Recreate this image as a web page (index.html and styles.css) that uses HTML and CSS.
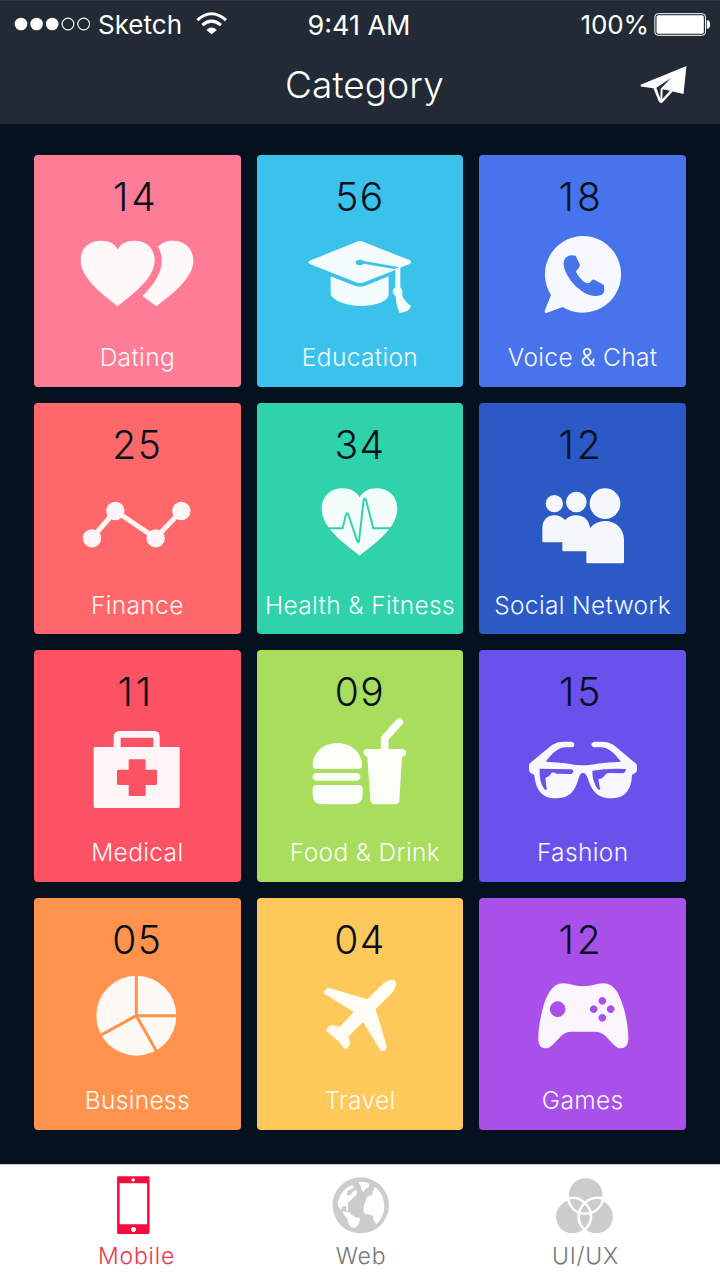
FILE: index.html
```html
<!DOCTYPE html>
<html lang="en">
<head>
<meta charset="utf-8">
<title>Category</title>
<link rel="stylesheet" href="styles.css">
</head>
<body>
<div class="screen">
  <header class="header">
    <div class="status">
      <div class="status-left">
        <svg class="signal" viewBox="0 0 78 14"><g fill="#fff"><circle cx="7" cy="7" r="6.3"/><circle cx="22.6" cy="7" r="6.3"/><circle cx="38.2" cy="7" r="6.3"/></g><g fill="none" stroke="#fff" stroke-width="1.1"><circle cx="54" cy="7" r="5.9"/><circle cx="69.7" cy="7" r="5.9"/></g></svg>
        <span class="carrier">Sketch</span>
        <svg class="wifi" viewBox="588 34 92 68"><path d="M592 58Q634 20 677 58" fill="none" stroke="#fff" stroke-width="9"/><path d="M607 73Q634 49 662 73" fill="none" stroke="#fff" stroke-width="9"/><path d="M619 87Q634 73 650 87L634 100Z" fill="#fff"/></svg>
      </div>
      <span class="clock">9:41 AM</span>
      <div class="status-right">
        <span class="percent">100%</span>
        <svg class="battery" viewBox="882 36 170 69"><rect x="884" y="38" width="152" height="65" rx="10" fill="none" stroke="#fff" stroke-width="3"/><rect x="889" y="43" width="142" height="55" rx="5" fill="#fff"/><path d="M1040 58h4q6 3 6 13t-6 12h-4z" fill="#fff"/></svg>
      </div>
    </div>
    <div class="nav">
      <h1 class="title">Category</h1>
      <svg class="send" viewBox="840 192 144 118"><path fill="#fff" fill-rule="evenodd" d="M841 252L980 195L971 280L938 272L905 308L897 304L880 262L842 257ZM889 261L901 294L902 264L933 231ZM908 265L907 295L930 270Z"/></svg>
    </div>
  </header>

  <main class="grid">
    <section class="tile pink"><div class="count narrow">14</div>
      <svg class="icon" viewBox="22 207 600 300"><path d="M264 469C232 442 153 390 153 330C153 292 180 272 214 272C240 272 255 281 264 298C273 281 289 272 315 272C350 272 375 295 375 331C375 389 297 442 264 469Z"/><path d="M385 290C397 277 411 272 430 272C467 272 491 297 491 332C491 389 412 443 380 469L338 438C366 410 396 374 396 335C396 316 393 303 385 290Z"/></svg>
      <div class="label">Dating</div></section>
    <section class="tile sky"><div class="count">56</div>
      <svg class="icon" viewBox="30 207 600 300"><path fill-rule="evenodd" d="M330 273Q335 273 343 277L480 331Q487 337 480 341L451 353L451 412Q460 420 456 433Q460 452 483 468Q477 487 449 489Q438 466 437 439Q422 430 432 415L436 412L436 360L342 397Q330 403 318 397L179 342Q171 337 179 332L317 277Q325 273 330 273ZM341 333C333 327 317 329 317 338C317 347 334 348 341 341L433 357L448 352Z"/><path d="M242 379L314 407Q330 413 346 407L416 379V432C416 456 373 468 330 468C286 468 242 448 242 430Z"/></svg>
      <div class="label">Education</div></section>
    <section class="tile blue"><div class="count narrow">18</div>
      <svg class="icon" viewBox="23 207 600 300"><path fill-rule="evenodd" d="M323 258A115 115 0 1 1 262 471L213 489Q205 489 209 480L227 435A115 115 0 0 1 323 258ZM301 317Q276 311 267 329C259 348 275 378 293 400C313 423 339 439 363 438Q386 438 387 421L386 405L357 389Q349 387 345 397Q341 400 335 400C321 394 309 379 302 365Q304 360 311 353Q315 347 313 343Z"/></svg>
      <div class="label">Voice &amp; Chat</div></section>

    <section class="tile coral"><div class="count">25</div>
      <svg class="icon" viewBox="22 200 600 300"><path d="M187 413L257 332L378 413L455 332" fill="none" stroke="currentColor" stroke-width="15"/><circle cx="187" cy="414" r="27.5"/><circle cx="257" cy="332" r="27.5"/><circle cx="378" cy="414" r="27.5"/><circle cx="455" cy="332" r="27.5"/></svg>
      <div class="label">Finance</div></section>
    <section class="tile green"><div class="count">34</div>
      <svg class="icon" viewBox="690 200 600 300"><path d="M989 466C955 438 875 386 875 326C875 289 902 264 936 264C961 264 979 274 989 291C999 274 1016 264 1041 264C1077 264 1102 290 1102 326C1102 386 1023 438 989 466Z"/><path class="cut" d="M896 384H938L948 342Q951 336 955 342L982 423Q985 429 987 422L1001 299Q1004 290 1008 299L1030 384H1085" fill="none" stroke-width="6"/></svg>
      <div class="label">Health &amp; Fitness</div></section>
    <section class="tile royal"><div class="count narrow">12</div>
      <svg class="icon" viewBox="23 200 600 300"><circle cx="237" cy="310" r="26"/><circle cx="303" cy="305" r="31"/><circle cx="389" cy="310" r="46"/><path d="M204 426Q201 426 201 423V383C201 358 218 345 237 345Q257 345 269 359Q281 345 302 345C327 345 342 361 344 383Q362 362 389 362C422 362 446 386 446 418V486Q446 489 443 489H336Q333 489 333 486V453H264Q261 453 261 450V426Z"/></svg>
      <div class="label">Social Network</div></section>

    <section class="tile red"><div class="count narrow">11</div>
      <svg class="icon" viewBox="22 207 600 300"><path fill-rule="evenodd" d="M252 306V276Q252 258 270 258H374Q390 258 390 276V306H446Q450 306 450 310V485Q450 489 446 489H196Q192 489 192 485V310Q192 306 196 306ZM273 278V306H371V278ZM301 343Q297 343 297 347V374H266Q262 374 262 378V416Q262 420 266 420H297V449Q297 453 301 453H344Q348 453 348 449V420H378Q382 420 382 416V378Q382 374 378 374H348V347Q348 343 344 343Z"/></svg>
      <div class="label">Medical</div></section>
    <section class="tile lime"><div class="count">09</div>
      <svg class="icon" viewBox="690 206 600 300"><path d="M848 359C848 324 878 293 922 293C966 293 996 324 996 359Q996 371 984 371H860Q848 371 848 359Z"/><rect x="848" y="383" width="143" height="23" rx="11.5"/><path d="M860 419H986Q998 419 998 431V448Q998 477 968 477H878Q848 477 848 448V431Q848 419 860 419Z"/><path d="M1064 322V279L1108 230" fill="none" stroke="currentColor" stroke-width="23" stroke-linecap="round" stroke-linejoin="round"/><path d="M1011 311H1117Q1129 312 1129 323Q1127 333 1116 334L1108 465Q1107 477 1096 477H1033Q1022 477 1021 465L1012 334Q1000 331 1000 321Q1001 311 1011 311Z"/></svg>
      <div class="label nudge">Food &amp; Drink</div></section>
    <section class="tile violet"><div class="count narrow">15</div>
      <svg class="icon" viewBox="23 207 600 300"><path fill-rule="evenodd" d="M161 362Q161 356 169 350L230 300Q245 290 265 290H287Q297 291 297 299Q296 307 288 307H273C247 307 230 326 211 350Q248 351 280 356Q305 361 322 361Q338 361 365 356Q398 351 437 350C418 326 401 307 375 307H359Q349 306 348 299Q349 291 359 290H380Q400 290 415 300L475 350Q485 356 485 362V376Q483 385 470 389C468 435 450 460 405 460C363 460 347 431 337 400Q332 384 323 384Q314 384 310 400C300 435 286 460 242 460C197 460 180 430 177 389Q161 384 161 374ZM193 371C192 400 197 422 210 435Q218 434 213 425L210 399Q224 394 228 384Q232 380 244 386L289 387Q301 374 286 373ZM351 377C351 402 359 422 370 435Q378 434 373 427L369 402Q381 402 387 393Q392 384 402 384L444 385Q453 380 451 372Q397 369 351 377Z"/></svg>
      <div class="label">Fashion</div></section>

    <section class="tile orange"><div class="count">05</div>
      <svg class="icon" viewBox="22 200 600 300"><circle cx="320" cy="361" r="120"/><path class="cut" d="M320 236V361H445M320 361L380 467M320 361L212 420" fill="none" stroke-width="9"/></svg>
      <div class="label">Business</div></section>
    <section class="tile yellow"><div class="count">04</div>
      <svg class="icon" viewBox="690 200 600 300"><path d="M1012 312L1056 268Q1077 250 1092 254Q1101 260 1096 276Q1092 288 1080 299L1037 341L1070 453Q1071 462 1065 466Q1056 470 1051 464L999 380L956 423L960 443Q960 448 957 451L951 459Q946 463 941 458L923 434Q919 436 916 430L892 409Q886 405 891 399L900 391Q905 388 911 390L929 394L972 350L884 296Q879 292 883 288L889 281Q894 277 901 279Z"/></svg>
      <div class="label">Travel</div></section>
    <section class="tile purple"><div class="count narrow">12</div>
      <svg class="icon" viewBox="23 200 600 300"><path fill-rule="evenodd" d="M264 264C287 264 294 273 323 273C354 273 361 264 384 264C418 264 434 299 446 341C454 370 459 405 459 429C459 448 451 459 438 459C420 459 410 441 393 424C380 411 370 409 355 409H293C276 409 267 412 255 424C238 441 227 459 209 459C195 459 189 447 189 429C189 405 194 370 202 341C214 299 230 264 264 264ZM247 318a23.500 23.500 0 1 0 .1 0zM381 305a11.500 11.500 0 1 0 .1 0zM355 330a11.500 11.500 0 1 0 .1 0zM406 330a11.500 11.500 0 1 0 .1 0zM381 356a11.500 11.500 0 1 0 .1 0z"/></svg>
      <div class="label">Games</div></section>
  </main>

  <nav class="tabs">
    <a class="tab active">
      <svg class="tab-icon" preserveAspectRatio="none" viewBox="73 56 168 180"><path fill="#f20d3c" fill-rule="evenodd" d="M108 63H191Q195 63 195 67V232Q195 236 191 236H108Q104 236 104 232V67Q104 63 108 63ZM111 84V207H188V84ZM149 69a5 5 0 1 0 .1 0zM150 215a7 7.500 0 1 0 .1 0z"/></svg>
      <span class="tab-label">Mobile</span></a>
    <a class="tab">
      <svg class="tab-icon" preserveAspectRatio="none" viewBox="701 56 168 180"><ellipse cx="787" cy="150" rx="79" ry="84" fill="#ccc"/><g fill="#fff"><path d="M767 90C750 90 729 112 722 143Q723 157 734 164L735 154Q742 149 747 155L746 166L752 168L751 151Q748 145 753 141L771 123Q776 120 777 108Q773 101 767 106Q764 115 751 122Q746 115 752 105Q760 103 767 97Z"/><path d="M780 80Q797 78 812 85L808 97Q797 99 795 111Q787 104 787 92Z"/><path d="M827 94C850 113 859 149 849 178Q844 193 831 206Q822 198 821 183Q817 175 800 177Q792 170 796 151L804 125L819 119L821 109Z"/><path d="M735 168L748 170Q759 170 761 178Q770 187 784 188Q787 198 777 213L768 218Q757 215 754 208L750 190Q740 182 735 168Z"/></g></svg>
      <span class="tab-label">Web</span></a>
    <a class="tab">
      <svg class="tab-icon" preserveAspectRatio="none" viewBox="1330 56 168 180"><g fill="#ccc"><ellipse cx="1416" cy="118" rx="47" ry="49"/><ellipse cx="1379" cy="184" rx="46" ry="50"/><ellipse cx="1446" cy="184" rx="46" ry="50"/></g><path fill="none" stroke="#fff" stroke-width="7" d="M1365 130Q1391 121 1412 141Q1433 162 1431 185Q1430 207 1413 223Q1396 207 1396 185Q1395 162 1415 141Q1438 121 1466 130M1366 129C1372 158 1390 175 1414 175C1440 175 1459 158 1466 129"/></svg>
      <span class="tab-label">UI/UX</span></a>
  </nav>
</div>
</body>
</html>
```
FILE: styles.css
```css
* { box-sizing: border-box; }
body { margin: 0; font-family: Inter, "Liberation Sans", sans-serif; }
svg { display: block; flex: none; }

.screen {
  width: 720px;
  height: 1280px;
  display: flex;
  flex-direction: column;
  background: #03121e;
  overflow: hidden;
}

.header {
  height: 124px;
  background: #222b35;
  border-top: 1px solid #303a45;
  color: #fff;
}
.status {
  height: 46px;
  padding: 0 10px 0 14px;
  display: grid;
  grid-template-columns: 1fr auto 1fr;
  align-items: center;
  font-size: 26px;
}
.status-left, .status-right { display: flex; align-items: center; }
.status-right { justify-content: flex-end; gap: 6px; }
.signal { width: 78px; height: 14px; }
.carrier { margin-left: 6px; font-size: 26px; }
.clock { font-size: 27px; padding-right: 6px; padding-top: 2px; }
.wifi { width: 31px; height: 23px; margin: 0 0 2px 14px; }
.percent { margin-right: -1px; padding-top: 1px; letter-spacing: -0.1px; }
.battery { width: 57px; height: 23px; margin: 0 -1px 0 0; }

.nav {
  height: 74px;
  padding: 0 32px;
  display: grid;
  grid-template-columns: 1fr auto 1fr;
  align-items: center;
}
.title {
  grid-column: 2;
  margin: 0;
  padding-left: 9px;
  font-size: 37px;
  font-weight: 300;
  letter-spacing: 0.1px;
}
.send { width: 48px; height: 39px; justify-self: end; }

.grid {
  height: 1040px;
  padding: 31px 34px 34.4px;
  display: grid;
  grid-template-columns: repeat(3, 1fr);
  grid-template-rows: repeat(4, 1fr);
  gap: 16px;
}
.tile {
  padding-top: 20px;
  border-radius: 4px;
  background: var(--c);
  color: var(--ink);
  display: flex;
  flex-direction: column;
  align-items: center;
  overflow: hidden;
}
.count {
  height: 44px;
  line-height: 44px;
  font-size: 39px;
  font-weight: 300;
  letter-spacing: 1.5px;
  color: #04101c;
}
.narrow { letter-spacing: 3px; padding-right: 3px; }
.icon { width: 200px; height: 100px; fill: currentColor; }
.cut { stroke: var(--c); }
.label {
  margin-top: 22px;
  line-height: 33px;
  font-size: 24.5px;
  font-weight: 350;
  letter-spacing: 0.35px;
  white-space: nowrap;
}
.nudge { padding-left: 10px; }

.pink { --c: #ff7c97; --ink: #fff8f9; }
.sky { --c: #3bc2ea; --ink: #f4fcfe; }
.blue { --c: #4774ea; --ink: #f5f8fe; }
.coral { --c: #ff686a; --ink: #fff5f6; }
.green { --c: #30d2aa; --ink: #f3fdfa; }
.royal { --c: #2b59c6; --ink: #f4f7fc; }
.red { --c: #fd5264; --ink: #fff5f7; }
.lime { --c: #a9dd5d; --ink: #fbfef7; }
.violet { --c: #6b51eb; --ink: #f8f6fe; }
.orange { --c: #ff934d; --ink: #fff9f5; }
.yellow { --c: #ffc85a; --ink: #fffcf6; }
.purple { --c: #a950ea; --ink: #fbf6fe; }

.tabs {
  height: 116px;
  padding: 8.7px 23.25px 0;
  background: #fff;
  border-top: 1px solid #c5cad0;
  display: grid;
  grid-template-columns: repeat(3, 1fr);
}
.tab {
  display: flex;
  flex-direction: column;
  align-items: center;
  color: #777;
}
.tab-icon { width: 60px; height: 60px; }
.tab-label {
  margin-top: 7px;
  padding-left: 2px;
  line-height: 30px;
  font-size: 23px;
  font-weight: 300;
  letter-spacing: 0.8px;
}
.active { color: #f23350; }
```
